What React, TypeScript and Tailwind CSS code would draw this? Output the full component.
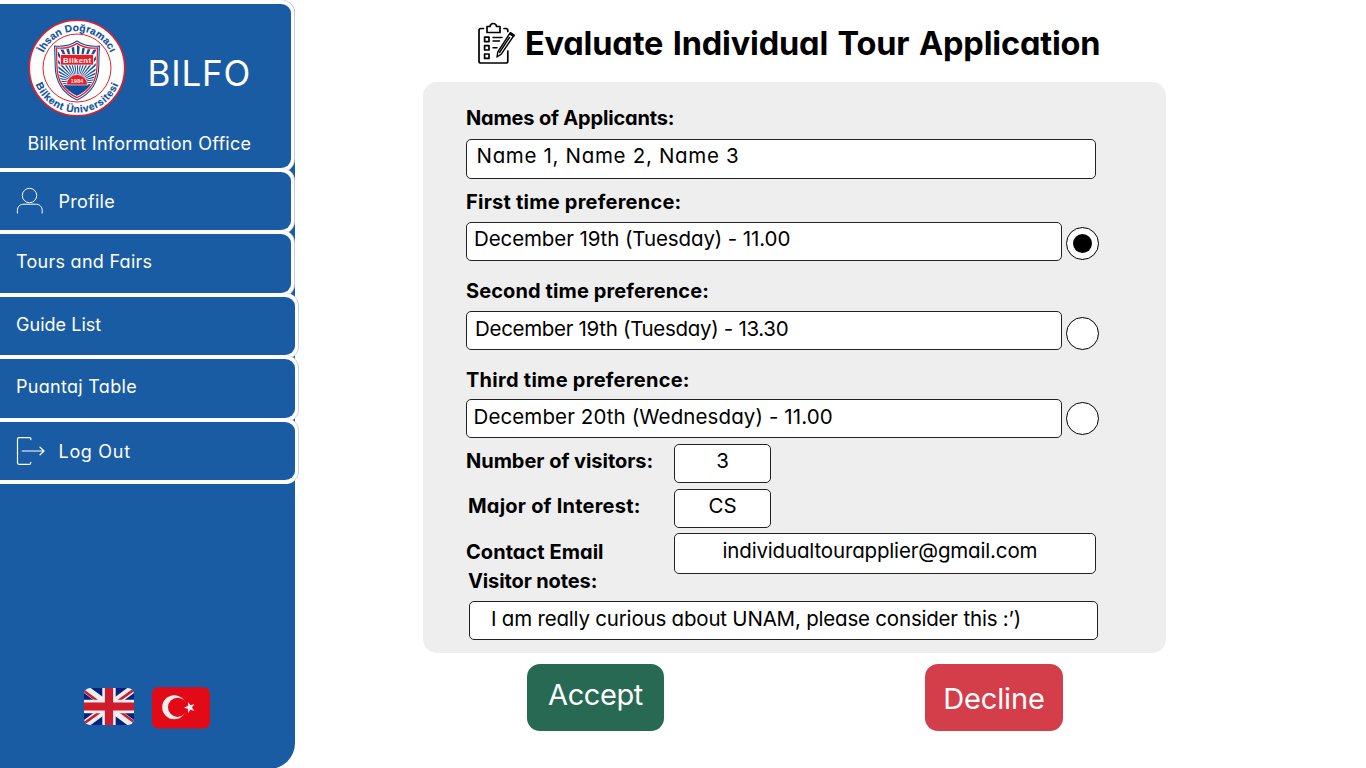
import React from "react";

const INTER = "font-['Inter','Noto_Sans',sans-serif] [font-feature-settings:'cv11']";

function Logo() {
  const rays = Array.from({ length: 40 }, (_, i) => {
    const a = ((i * 9 - 90) * Math.PI) / 180;
    const b = a + 0.075;
    return `M0 14L${(50 * Math.cos(a)).toFixed(2)} ${(14 + 50 * Math.sin(a)).toFixed(2)}L${(50 * Math.cos(b)).toFixed(2)} ${(14 + 50 * Math.sin(b)).toFixed(2)}Z`;
  }).join("");
  const shield = "M0 -27C-6 -23 -14 -21 -22.5 -22C-22 -16 -22 -10 -21.8 -2C-21.5 14 -15 25 0 32C15 25 21.5 14 21.8 -2C22 -10 22 -16 22.5 -22C14 -21 6 -23 0 -27Z";
  return (
    <svg className="h-[98px] w-[98px]" viewBox="-49 -49 98 98">
      <defs>
        <clipPath id="shield"><path d={shield} transform="translate(0 .3) scale(.86)" /></clipPath>
        <path id="topArc" d="M-36.8 0A36.8 36.8 0 0 1 36.8 0" />
        <path id="bottomArc" d="M-44.6 0A44.6 44.6 0 0 0 44.6 0" />
      </defs>
      <circle r="47.7" fill="#fff" stroke="#ec1c24" strokeWidth="1.6" />
      <circle r="34" fill="#fff" stroke="#ec1c24" strokeWidth="1" />
      <g fontFamily="Liberation Sans" fontWeight="700" fontSize="10.2" fill="#0f4fa0" stroke="#0f4fa0" strokeWidth=".15" textAnchor="middle">
        <text><textPath href="#topArc" startOffset="50%" textLength="84">İhsan Doğramacı</textPath></text>
        <text><textPath href="#bottomArc" startOffset="50%" textLength="106">Bilkent Üniversitesi</textPath></text>
      </g>
      <path d={shield} fill="#fff" stroke="#0f4fa0" strokeWidth="1.1" />
      <path d={shield} transform="translate(0 .2) scale(.92)" fill="#fff" stroke="#ec1c24" strokeWidth="1.4" />
      <g clipPath="url(#shield)">
        <path d={rays} fill="#0f4fa0" />
        <rect x="-23" y="17" width="46" height="18" fill="#0f4fa0" />
        <path d="M-10.5 17A10.5 10.5 0 0 1 10.5 17Z" fill="#ec1c24" stroke="#fff" strokeWidth=".6" />
      </g>
      <rect x="-16.5" y="-13.5" width="33" height="10.5" fill="#ec1c24" stroke="#fff" strokeWidth=".7" />
      <g fontFamily="Liberation Sans" fontWeight="700" fill="#fff" textAnchor="middle">
        <text y="-5.4" fontSize="7.8" textLength="28">Bilkent</text>
        <text y="15.3" fontSize="5.2" textLength="12.5">1984</text>
      </g>
    </svg>
  );
}

function UserIcon() {
  return (
    <svg className="h-[28px] w-[28px]" viewBox="0 0 28 28" fill="none" stroke="#fff" strokeWidth="1">
      <circle cx="13.5" cy="8.5" r="7.2" />
      <path d="M1.4 26.5V23.5C1.4 19.5 4 17.2 8 17.2H19.5C23.5 17.2 26.2 19.5 26.2 23.5V26.5" />
    </svg>
  );
}

function ExitIcon() {
  return (
    <svg className="h-[28px] w-[29px]" viewBox="0 0 29 28" fill="none" stroke="#fff" strokeWidth="1.2" strokeLinecap="round" strokeLinejoin="round">
      <path d="M14.8 2.7V1.6Q14.8.7 13.8.7H3Q1.5.7 1.5 2.2V25.8Q1.5 27.3 3 27.3H13.5Q14.8 27.3 14.8 25.3" />
      <path d="M6.3 14H28M24 10.2L28 14L24 17.8" />
    </svg>
  );
}

function ClipboardIcon() {
  return (
    <svg className="h-[44px] w-[40px] shrink-0" viewBox="0 0 40 44" fill="none" stroke="#000" strokeWidth="1.7" strokeLinecap="round" strokeLinejoin="round">
      <path d="M7.5 7.5H5Q3 7.5 3 9.5V40.2Q3 42 5 42H29.8Q31.8 42 31.8 40.2V30M28 7.5H29.8Q31.8 7.5 31.8 9.5V10.5" />
      <path d="M11 5.5H14Q14.5 2.5 17.3 2.5Q20 2.5 20.7 5.5H24V11.5H11Z" />
      <path d="M8.6 16.2H13V20.6H8.6ZM8.6 24.6H13V29H8.6ZM8.6 33H13V37.4H8.6Z" />
      <path d="M17 16.4H26M17 20H23.5M17 26.8H21" strokeWidth="1.5" />
      <path d="M33.8 12.5L37.5 15L25.3 33.2L21 36L21.8 30.8ZM33.5 16.5L23.5 31.5" strokeWidth="1.4" />
      <path d="M34.5 12.5L37.5 14.5" strokeWidth="2.8" />
    </svg>
  );
}

function UkFlag() {
  return (
    <svg className="mt-[1px] h-[37px] w-[50px]" viewBox="0 0 50 37">
      <defs>
        <clipPath id="uk"><rect width="50" height="37" rx="6" /></clipPath>
      </defs>
      <g clipPath="url(#uk)">
        <rect width="50" height="37" fill="#00247d" />
        <path d="M0 0L50 37M50 0L0 37" stroke="#eee" strokeWidth="8" />
        <path d="M0 3L25 21.5M50 34L25 15.5M-1 36L25 17.5M51 1L25 19.5" stroke="#cf1b2b" strokeWidth="2.6" />
        <path d="M25 0V37M0 18.5H50" stroke="#eee" strokeWidth="13.4" />
        <path d="M25 0V37M0 18.5H50" stroke="#cf1b2b" strokeWidth="8.2" />
      </g>
    </svg>
  );
}

function TurkishFlag() {
  return (
    <svg className="h-[42px] w-[58px]" viewBox="0 0 58 42">
      <rect y=".3" width="58" height="41.2" rx="6" fill="#e30a17" />
      <circle cx="22.2" cy="20.3" r="12" fill="#eee" />
      <circle cx="25.6" cy="20.3" r="9.6" fill="#e30a17" />
      <path d="M32 20.5L35.9 19.1L36 14.9L38.5 18.2L42.4 17L40 20.4L42.4 23.9L38.5 22.7L36 26L35.9 21.9Z" fill="#eee" />
    </svg>
  );
}

const BOX = "relative flex shrink-0 border-y-4 border-r-[3px] border-white bg-[#1a5ca3] rounded-r-[13px] shadow-[1px_0_0_#c3d3e8]";
const ITEM = "text-[18px] leading-6 text-white";
const LABEL = "text-[20px] leading-6 font-bold whitespace-pre";
const FIELD = "flex shrink-0 rounded-[5px] border border-[#222] bg-white text-[20.5px] leading-[31px] whitespace-pre";

function Radio({ on = false, className }: { on?: boolean; className: string }) {
  return (
    <span className={`ml-1 flex size-[33px] shrink-0 items-center justify-center rounded-full border border-black bg-white ${className}`}>
      {on && <span className="size-[19px] rounded-full bg-black" />}
    </span>
  );
}

export default function App() {
  return (
    <div className={`flex h-[768px] w-[1366px] overflow-hidden bg-white text-black ${INTER}`}>
      <aside className="flex h-[769px] w-[295px] shrink-0 flex-col rounded-tr-[14px] rounded-br-[26px] bg-[#1a5ca3]">
        <div className={`${BOX} h-[172px] w-[294px] flex-col text-white`}>
          <div className="mt-[15px] ml-[28px] flex h-[98px]">
            <Logo />
            <div className="mt-[34px] ml-[21.5px] text-[35px] leading-[40px] font-normal tracking-[0.8px]">BILFO</div>
          </div>
          <div className="mt-[15px] ml-[27.5px] text-[18px] leading-6 tracking-[0.28px] whitespace-nowrap">Bilkent Information Office</div>
        </div>
        <nav className="flex flex-col">
          <a className={`${BOX} ${ITEM} -mt-1 h-[66px] w-[294px]`}>
            <span className="mt-[15px] ml-4 w-[42.5px]"><UserIcon /></span>
            <span className="mt-[18px] tracking-[0.25px]">Profile</span>
          </a>
          <a className={`${BOX} ${ITEM} -mt-1 h-[67px] w-[294px]`}>
            <span className="mt-[16px] ml-4 tracking-[0.27px]">Tours and Fairs</span>
          </a>
          <a className={`${BOX} ${ITEM} -mt-1 h-[66px] w-[298px]`}>
            <span className="mt-[16px] ml-4 tracking-[0.03px]">Guide List</span>
          </a>
          <a className={`${BOX} ${ITEM} -mt-1 h-[66.5px] w-[298px]`}>
            <span className="mt-[16px] ml-4 tracking-[0.3px]">Puantaj Table</span>
          </a>
          <a className={`${BOX} ${ITEM} -mt-1 h-[66.5px] w-[298px]`}>
            <span className="mt-[15px] ml-4 w-[42.5px]"><ExitIcon /></span>
            <span className="mt-[18.5px] tracking-[0.7px]">Log Out</span>
          </a>
        </nav>
        <div className="mt-[203px] ml-[84.3px] flex gap-[18px]">
          <UkFlag />
          <TurkishFlag />
        </div>
      </aside>

      <main className="flex flex-1 flex-col">
        <h1 className="mt-[21px] ml-[181px] flex h-[61px]">
          <ClipboardIcon />
          <span className="mt-[3px] ml-[9px] text-[32.5px] leading-[40px] font-bold tracking-[-0.17px] whitespace-nowrap [word-spacing:2px]">Evaluate Individual Tour Application</span>
        </h1>

        <section className="ml-[128px] flex h-[571px] w-[743px] shrink-0 flex-col rounded-[14px] bg-[#eee] pl-[43px]">
          <div className={`${LABEL} mt-6 tracking-[-0.18px]`}>Names of Applicants:</div>
          <div className={`${FIELD} mt-[9px] h-[40px] w-[630px] pl-[9.5px] tracking-[0.68px]`}>Name 1, Name 2, Name 3</div>

          <div className={`${LABEL} mt-[11px] tracking-[0.24px]`}>First time preference:</div>
          <div className="mt-2 flex">
            <div className={`${FIELD} h-[39px] w-[596px] pl-[7px] tracking-[-0.1px]`}>December 19th (Tuesday) - 11.00</div>
            <Radio on className="mt-[5px]" />
          </div>

          <div className={`${LABEL} mt-[18px] tracking-[0.11px]`}>Second time preference:</div>
          <div className="mt-2 flex">
            <div className={`${FIELD} h-[39px] w-[596px] pt-px pl-[8px] tracking-[-0.31px]`}>December 19th (Tuesday) - 13.30</div>
            <Radio className="mt-[6px]" />
          </div>

          <div className={`${LABEL} mt-[18px] tracking-[0.27px]`}>Third time preference:</div>
          <div className="mt-[7px] flex">
            <div className={`${FIELD} h-[39px] w-[596px] pt-px pl-[6.5px] tracking-[0.11px]`}>December 20th (Wednesday) - 11.00</div>
            <Radio className="mt-[3px]" />
          </div>

          <div className="mt-[6px] flex">
            <div className={`${LABEL} mt-[5px] w-[208px] tracking-[-0.03px]`}>Number of visitors:</div>
            <div className={`${FIELD} h-[39px] w-[97px] justify-center`}>3</div>
          </div>
          <div className="mt-[6px] flex">
            <div className={`${LABEL} mt-[5px] w-[208px] pl-[2px] tracking-[0.22px]`}>Major of Interest:</div>
            <div className={`${FIELD} h-[39px] w-[97px] justify-center`}>CS</div>
          </div>
          <div className="mt-[5px] flex">
            <div className={`${LABEL} mt-[7px] w-[208px] tracking-[0.05px]`}>Contact Email</div>
            <div className={`${FIELD} h-[41px] w-[422px] pt-px pl-[47.5px] tracking-[-0.16px]`}>individualtourapplier@gmail.com</div>
          </div>

          <div className={`${LABEL} -mt-[5px] pl-[2px] tracking-[-0.12px]`}>Visitor notes:</div>
          <div className={`${FIELD} mt-2 ml-[3px] h-[39px] w-[629px] pt-px pl-[21px] tracking-[-0.2px]`}>I am really curious about UNAM, please consider this :’)</div>
        </section>

        <div className="mt-[11px] ml-[232px] flex gap-[261px] text-[29px] leading-[36px] text-white">
          <button className="flex h-[67px] w-[137px] justify-center rounded-[13px] bg-[#286954] pt-[13px] tracking-[-0.4px]">Accept</button>
          <button className="flex h-[67px] w-[138px] justify-center rounded-[13px] bg-[#d43d4a] pt-[17px] tracking-[-0.15px]">Decline</button>
        </div>
      </main>
    </div>
  );
}
